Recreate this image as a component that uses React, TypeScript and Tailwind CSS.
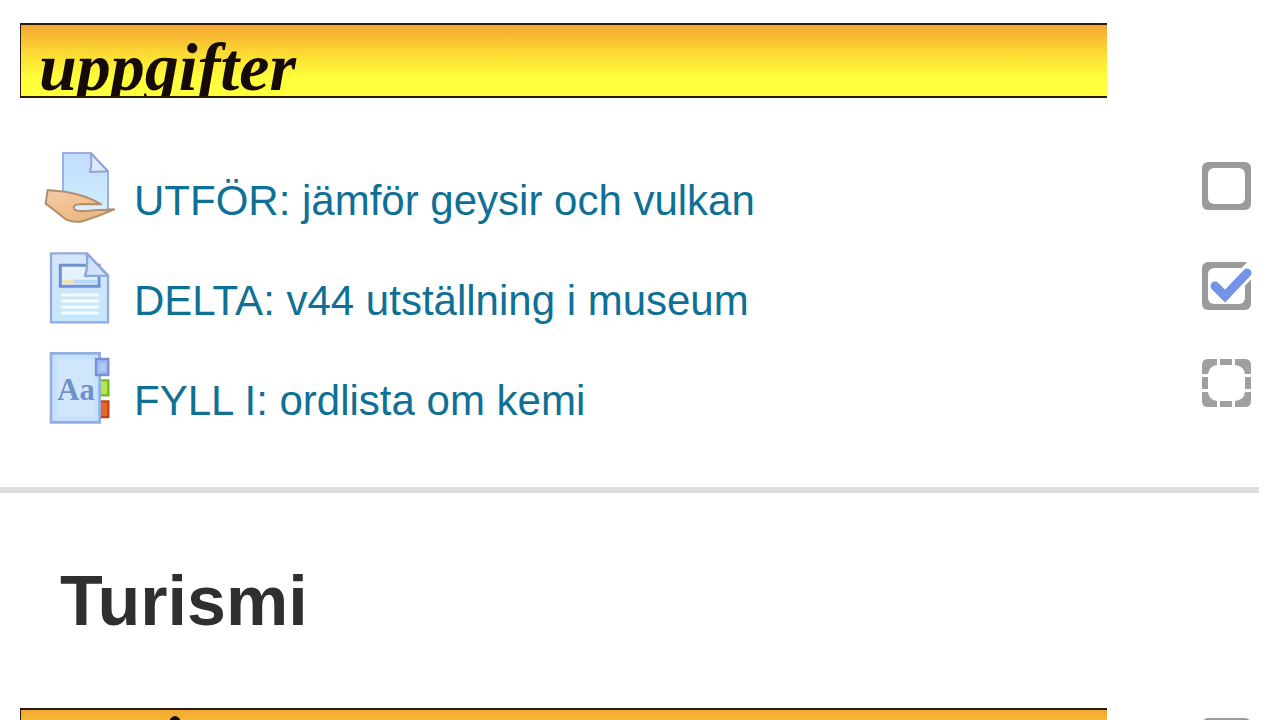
import { useState } from "react";
import type { ComponentType } from "react";

type Completion = "manual" | "auto";

function AssignIcon() {
  return (
    <svg viewBox="27 33 216 216" className="size-18 shrink-0" aria-hidden="true">
      <defs>
        <linearGradient id="assign-page" x1="0" y1="0" x2="0" y2="1">
          <stop offset="0" stopColor="#c3dcfc" />
          <stop offset="1" stopColor="#cdeefc" />
        </linearGradient>
        <linearGradient id="assign-hand" x1="0" y1="0" x2="0.6" y2="1">
          <stop offset="0" stopColor="#f4cda4" />
          <stop offset="1" stopColor="#ecb680" />
        </linearGradient>
      </defs>
      <path d="M84 36H167L219 91V210H84Z" fill="url(#assign-page)" stroke="#9caee2" strokeWidth="6" />
      <path d="M167 36L219 91L165 93Q172 70 167 36Z" fill="#dcecfc" stroke="#8fa2da" strokeWidth="6" strokeLinejoin="round" />
      <path
        d="M38 147L90 152Q160 164 198 190L140 189Q116 190 116 200Q118 210 140 211L190 207L238 205Q190 226 145 240Q118 247 92 235L58 208L32 188Z"
        fill="url(#assign-hand)"
        stroke="#b08f70"
        strokeWidth="6"
        strokeLinejoin="round"
      />
      <path d="M121 200Q122 194 140 194L212 194L216 203L190 203L140 207Q122 206 121 200Z" fill="#dfecfb" />
    </svg>
  );
}

function PageIcon() {
  return (
    <svg viewBox="27 36 216 216" className="size-18 shrink-0" aria-hidden="true">
      <defs>
        <linearGradient id="page-sheet" x1="0" y1="0" x2="0" y2="1">
          <stop offset="0" stopColor="#d5e6fb" />
          <stop offset="1" stopColor="#c6e6fb" />
        </linearGradient>
      </defs>
      <path d="M48 40H155L219 107V247H48Z" fill="url(#page-sheet)" stroke="#94a9df" strokeWidth="7" />
      <path d="M76 76H192V139H76Z" fill="#e4f3fe" stroke="#6f90d2" strokeWidth="9" />
      <path d="M83 119H116V131H83Z" fill="#f1e2ae" />
      <path d="M116 119H188V131H116Z" fill="#b5d9f6" />
      <path d="M155 40L219 107L150 108Q160 80 155 40Z" fill="#cfe4fb" stroke="#8fa6dc" strokeWidth="7" strokeLinejoin="round" />
      <path d="M79 165H192M79 183H192M79 201H192M79 219H192" stroke="#f3fbff" strokeWidth="9" />
    </svg>
  );
}

function GlossaryIcon() {
  return (
    <svg viewBox="27 36 216 216" className="size-18 shrink-0" aria-hidden="true">
      <path d="M190 121H220V166H190Z" fill="#b2e84a" stroke="#74b82a" strokeWidth="7" />
      <path d="M190 184H220V231H190Z" fill="#e8682a" stroke="#bf451c" strokeWidth="7" />
      <path d="M48 40H194V247H48Z" fill="#c4e2fb" stroke="#94aee2" strokeWidth="8" />
      <path d="M68 58H180V232H68Z" fill="#d0e6fc" />
      <path d="M183 57H220V105H183Z" fill="#9dbdf3" stroke="#7990d2" strokeWidth="7" />
      <path d="M196 70H210V93H196Z" fill="#b1cbf8" />
      <text
        x="123"
        y="180"
        textAnchor="middle"
        fill="#7090ca"
        fontSize="92"
        className="font-['Liberation_Serif',serif] font-bold"
      >
        Aa
      </text>
    </svg>
  );
}

const ACTIVITIES: {
  title: string;
  icon: ComponentType;
  completion: Completion;
  done: boolean;
}[] = [
  { title: "UTFÖR: jämför geysir och vulkan", icon: AssignIcon, completion: "manual", done: false },
  { title: "DELTA: v44 utställning i museum", icon: PageIcon, completion: "manual", done: true },
  { title: "FYLL I: ordlista om kemi", icon: GlossaryIcon, completion: "auto", done: false },
];

function CompletionBox({ label, completion, done }: { label: string; completion: Completion; done: boolean }) {
  const [checked, setChecked] = useState(done);

  return (
    <label className="relative block shrink-0 cursor-pointer">
      <input
        type="checkbox"
        aria-label={label}
        checked={checked}
        onChange={(e) => setChecked(e.target.checked)}
        className="absolute inset-0 size-full cursor-pointer opacity-0"
      />
      <svg viewBox="0 0 50 56" className="h-14 w-[50px]" aria-hidden="true">
        {completion === "manual" ? (
          <>
            <rect x="0" y="4" width="49" height="48" rx="6" fill="#9b9b9b" />
            <rect x="6" y="10" width="37" height="36" rx="6" fill="#fff" />
          </>
        ) : (
          <g fill="#a0a0a0">
            <path d="M6 1H15V7Q7 8 6 16H0V7Q0 1 6 1Z" />
            <path d="M18 1H30V7H18Z" />
            <path d="M33 1H43Q49 1 49 7V16H43Q42 8 33 7Z" />
            <path d="M43 19H49V31H43Z" />
            <path d="M49 34V43Q49 49 43 49H33V43Q42 42 43 34Z" />
            <path d="M18 43H30V49H18Z" />
            <path d="M15 49H6Q0 49 0 43V34H6Q7 42 15 43Z" />
            <path d="M0 19H6V31H0Z" />
          </g>
        )}
        {checked && (
          <>
            <path d="M24 36L52 8" fill="none" stroke="#fff" strokeWidth="15" />
            <path d="M13 28L23 38L45 15" fill="none" stroke="#7394e6" strokeWidth="9" strokeLinecap="round" />
          </>
        )}
      </svg>
    </label>
  );
}

export default function App() {
  return (
    <main className="h-screen overflow-hidden bg-white pl-5 pt-[23px] font-['Liberation_Sans',Arial,sans-serif]">
      <section>
        {/* Banner */}
        <div className="mr-[173px] h-[75px] overflow-hidden border-y-2 border-l border-[#2a1c08] bg-linear-to-b from-[#f2a632] via-[#fde034] via-45% to-[#ffff3c] to-75%">
          <h2 className="pl-[18px] font-['Liberation_Serif',serif] text-[68px] leading-[84px] font-bold text-[#160a04] italic">
            uppgifter
          </h2>
        </div>

        {/* Activities */}
        <ul className="mt-[54px] flex flex-col gap-7 pr-7 pl-6">
          {ACTIVITIES.map((a) => (
            <li key={a.title} className="flex h-18 items-start justify-between">
              <a href="#" className="flex gap-[18px] text-[#0f7095]">
                <a.icon />
                <span className="mt-6 text-[42px] leading-[50px]">{a.title}</span>
              </a>
              <div className="pt-[6px]">
                <CompletionBox label={a.title} completion={a.completion} done={a.done} />
              </div>
            </li>
          ))}
        </ul>
      </section>

      <hr className="mt-[63px] mr-[21px] -ml-5 h-[6px] border-0 bg-[#dedede]" />

      <section>
        <h1 className="mt-[68px] pl-10 text-[70px] leading-20 font-bold text-[#2f2f2f]">Turismi</h1>
        <div className="mt-[67px] flex items-start justify-between pr-7">
          <div className="mr-[95px] h-[75px] flex-1 overflow-hidden border-y-2 border-l border-[#2a1c08] bg-linear-to-b from-[#f2a632] via-[#fde034] via-45% to-[#ffff3c] to-75%">
            <svg viewBox="0 0 12 60" className="mt-1 ml-[148px] h-[60px] w-3" aria-hidden="true">
              <path d="M1 5Q6 -1 11 5L4 60H0Z" fill="#160a04" />
            </svg>
          </div>
          <div className="pt-[6px]">
            <CompletionBox label="Turismi" completion="manual" done={false} />
          </div>
        </div>
      </section>
    </main>
  );
}
